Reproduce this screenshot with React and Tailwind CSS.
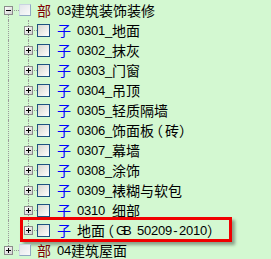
import React from 'react';

const CJK = '"Noto Sans CJK SC", sans-serif';
const LAT = '"Liberation Sans", "Noto Sans CJK SC", sans-serif';

const CHILDREN = [
  '0301_地面',
  '0302_抹灰',
  '0303_门窗',
  '0304_吊顶',
  '0305_轻质隔墙',
  '0306_饰面板（砖）',
  '0307_幕墙',
  '0308_涂饰',
  '0309_裱糊与软包',
  '0310_细部',
  '地面（GB 50209-2010）',
];

// fixed-pitch text like the old bitmap font: half width 7px, full width 14px
function Txt({ text }) {
  return (
    <span className="flex items-center h-full text-black">
      {[...text].map((ch, i) => {
        if (ch === '（') {
          // opening paren: half-width alternate, centred in a narrower cell
          return (
            <span
              key={i}
              className="inline-block w-[11px] text-center leading-none text-[14px] [font-feature-settings:'halt']"
              style={{ fontFamily: CJK }}
            >
              {ch}
            </span>
          );
        }
        const half = ch.charCodeAt(0) < 128;
        return (
          <span
            key={i}
            className={'inline-block text-center leading-none ' + (half ? 'w-[7px] text-[13px]' : 'w-[14px] text-[14px]')}
            style={{ fontFamily: half ? LAT : CJK }}
          >
            {ch === ' ' ? '\u00a0' : ch}
          </span>
        );
      })}
    </span>
  );
}

// classic tree expander box with +/- sign
function Expander({ open }) {
  return (
    <svg width="9" height="9" viewBox="0 0 9 9" className="relative z-10 block">
      <defs>
        <linearGradient id="exg" x1="0" y1="0" x2="1" y2="1">
          <stop offset="0" stopColor="#ffffff" />
          <stop offset="1" stopColor="#cfcfcf" />
        </linearGradient>
      </defs>
      <rect x="0.5" y="0.5" width="8" height="8" fill="url(#exg)" stroke="#8c8c8c" />
      <rect x="2" y="4" width="5" height="1" fill="#000" />
      {!open && <rect x="4" y="2" width="1" height="5" fill="#000" />}
    </svg>
  );
}

function Check({ faded }) {
  return (
    <span
      className={
        'relative z-10 block bg-gradient-to-br ' +
        (faded
          ? 'w-[12px] h-[12px] border border-[#8fa8c2] border-l-[#d0dbe6] border-t-[#c8d4e0] from-[#e2e6ea] to-[#fafafa]'
          : 'w-[13px] h-[13px] border border-[#1c5180] from-[#d6d6d0] to-white')
      }
    />
  );
}

// vertical dotted guide; part = 'full' | 'top' | 'bottom'
function VLine({ part }) {
  const pos = part === 'full' ? 'top-0 bottom-0' : part === 'top' ? 'top-0 h-[10px]' : 'top-[10px] bottom-0';
  return <span className={'absolute left-[8px] border-l border-dotted border-[#9a9a9a] ' + pos} />;
}

function Row({ level, open, last, first, tag, text }) {
  const top = level === 0;
  return (
    <div className="flex items-center h-[20px] whitespace-nowrap">
      {!top && (
        <div className="relative w-[20px] h-full flex-shrink-0">
          <VLine part="full" />
        </div>
      )}
      <div className={'relative h-full flex-shrink-0 flex items-center ' + (top ? 'w-[19px]' : 'w-[17px]')}>
        <VLine part={first && top ? 'bottom' : last ? 'top' : 'full'} />
        <span className="absolute left-[8px] right-0 top-[10px] border-t border-dotted border-[#9a9a9a]" />
        <span className="ml-[4px]"><Expander open={open} /></span>
      </div>
      <Check faded={top} />
      <span
        className={
          'inline-block w-[14px] text-center text-[14px] leading-none ' +
          (top ? 'ml-[6px] text-[#800000]' : 'ml-[7px] text-[#0000ff]')
        }
        style={{ fontFamily: CJK }}
      >
        {tag}
      </span>
      <span className="h-full ml-[6px]">
        <Txt text={text} />
      </span>
    </div>
  );
}

export default function App() {
  return (
    <div className="relative w-[271px] h-[259px] overflow-hidden bg-[#d3f8d1]">
      <Row level={0} open first tag="部" text="03建筑装饰装修" />
      {CHILDREN.map((c, i) => (
        <Row key={c} level={1} last={i === CHILDREN.length - 1} tag="子" text={c} />
      ))}
      <Row level={0} last tag="部" text="04建筑屋面" />

      {/* highlight annotation */}
      <div className="absolute left-[20px] top-[217px] w-[212px] h-[25px] border-[3px] border-[#f00000] shadow-[3px_3px_3px_rgba(0,0,0,0.35)]" />
    </div>
  );
}
